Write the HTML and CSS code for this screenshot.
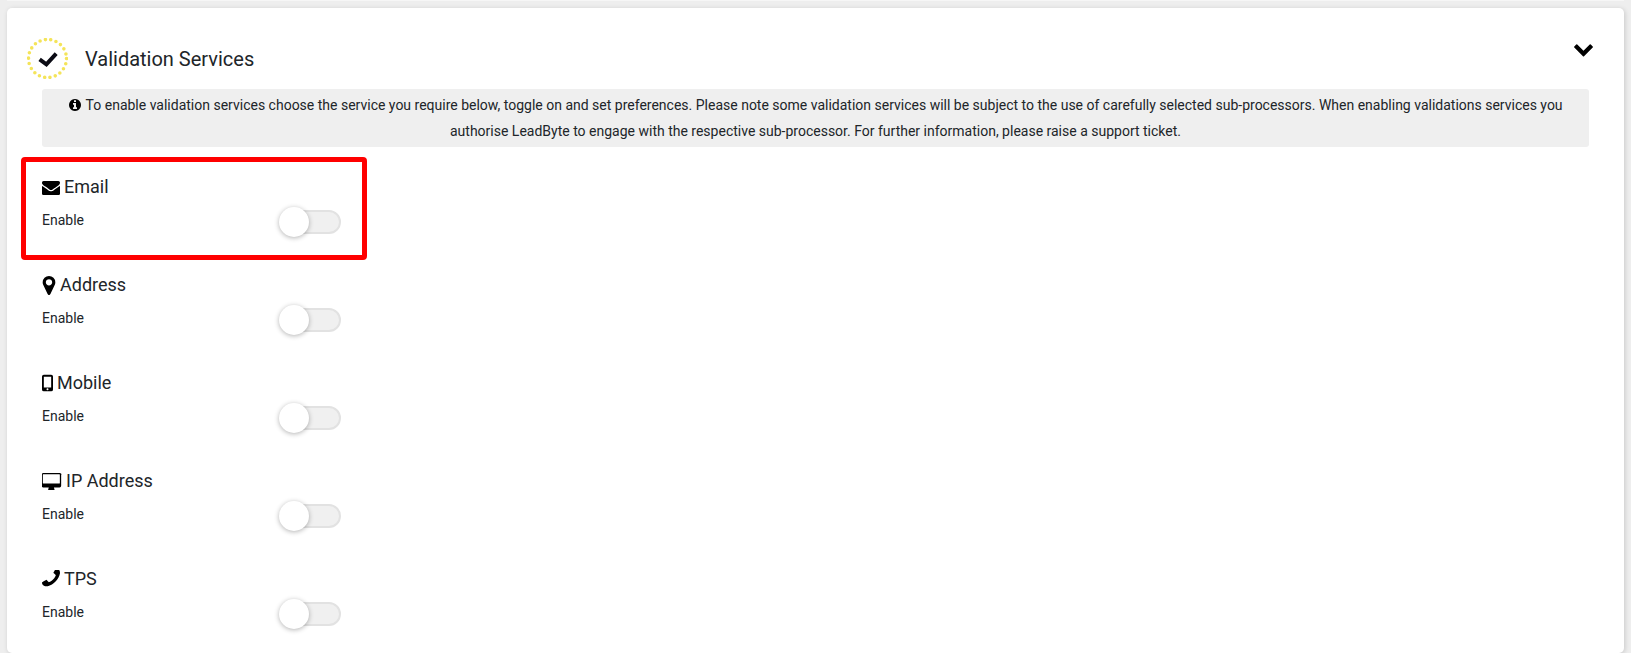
FILE: index.html
```html
<!DOCTYPE html>
<html lang="en">
<head>
  <meta charset="utf-8">
  <title>Validation Services</title>
  <link rel="stylesheet" href="styles.css">
</head>
<body>
  <div class="prev-card"></div>
  <div class="card">
    <div class="card-head">
      <svg class="ring" viewBox="0 0 41 41">
        <circle class="ring-dots" cx="20.5" cy="20.5" r="19"/>
        <polyline class="ring-check" points="12.6,21.4 19.4,26.4 29.2,15.6"/>
      </svg>
      <h2 class="card-title">Validation Services</h2>
      <svg class="chevron" viewBox="0 0 1792 1792"><path d="M1683 808l-742 741q-19 19-45 19t-45-19l-742-741q-19-19-19-45.5t19-45.5l166-165q19-19 45-19t45 19l531 531 531-531q19-19 45-19t45 19l166 165q19 19 19 45.5t-19 45.5z"/></svg>
    </div>

    <div class="notice">
      <svg class="notice-icon" viewBox="0 0 1792 1792"><path d="M1152 1376v-160q0-14-9-23t-23-9h-96v-512q0-14-9-23t-23-9h-320q-14 0-23 9t-9 23v160q0 14 9 23t23 9h96v320h-96q-14 0-23 9t-9 23v160q0 14 9 23t23 9h448q14 0 23-9t9-23zm-128-896v-160q0-14-9-23t-23-9h-192q-14 0-23 9t-9 23v160q0 14 9 23t23 9h192q14 0 23-9t9-23zm640 416q0 209-103 385.5t-279.5 279.5-385.5 103-385.5-103-279.5-279.5-103-385.5 103-385.5 279.5-279.5 385.5-103 385.5 103 279.5 279.5 103 385.5z"/></svg>
      To enable validation services choose the service you require below, toggle on and set preferences. Please note some validation services will be subject to the use of carefully selected sub-processors. When enabling validations services you authorise LeadByte to engage with the respective sub-processor. For further information, please raise a support ticket.
    </div>

    <div class="service">
      <div class="highlight"></div>
      <h3 class="service-name">
        <svg class="icon icon-email" viewBox="0 194 1792 1404"><path d="M1792 710v794q0 66-47 113t-113 47h-1472q-66 0-113-47t-47-113v-794q44 49 101 87 362 246 497 345 57 42 92.5 65.5t94.5 48 110 24.5h2q51 0 110-24.5t94.5-48 92.5-65.5q170-123 498-345 57-39 100-87zm0-294q0 79-49 151t-122 123q-376 261-468 325-10 7-42.5 30.5t-54 38-52 32.5-57.5 27-50 9h-2q-23 0-50-9t-57.5-27-52-32.5-54-38-42.5-30.5q-91-64-262-182.5t-205-142.5q-62-42-117-115.5t-55-136.5q0-78 41.5-130t118.5-52h1472q65 0 112.5 44.5t47.5 115.5z"/></svg>
        Email
      </h3>
      <div class="service-row">
        <span class="enable-label">Enable</span>
        <span class="toggle"><span class="knob"></span></span>
      </div>
    </div>

    <div class="service">
      <h3 class="service-name">
        <svg class="icon icon-address" viewBox="384 128 1024 1536"><path d="M1152 640q0-106-75-181t-181-75-181 75-75 181 75 181 181 75 181-75 75-181zm256 0q0 109-33 179l-364 774q-16 33-47.5 52t-67.5 19-67.5-19-46.5-52l-365-774q-33-70-33-179 0-212 150-362t362-150 362 150 150 362z"/></svg>
        Address
      </h3>
      <div class="service-row">
        <span class="enable-label">Enable</span>
        <span class="toggle"><span class="knob"></span></span>
      </div>
    </div>

    <div class="service">
      <h3 class="service-name">
        <svg class="icon icon-mobile" viewBox="0 0 12 18"><path fill-rule="evenodd" d="M2 0h8a2 2 0 0 1 2 2v14a2 2 0 0 1-2 2H2a2 2 0 0 1-2-2V2a2 2 0 0 1 2-2zM2 2.2v11.6h8V2.2zM6 14.6a1.1 1.1 0 1 0 0 2.2 1.1 1.1 0 0 0 0-2.2z"/></svg>
        Mobile
      </h3>
      <div class="service-row">
        <span class="enable-label">Enable</span>
        <span class="toggle"><span class="knob"></span></span>
      </div>
    </div>

    <div class="service">
      <h3 class="service-name">
        <svg class="icon icon-desktop" viewBox="0 0 1920 1664"><path d="M1728 992v-832q0-13-9.5-22.5t-22.5-9.5h-1600q-13 0-22.5 9.5t-9.5 22.5v832q0 13 9.5 22.5t22.5 9.5h1600q13 0 22.5-9.5t9.5-22.5zm128-832v1088q0 66-47 113t-113 47h-544q0 37 16 77.5t32 71 16 43.5q0 26-19 45t-45 19h-512q-26 0-45-19t-19-45q0-14 16-44t32-70 16-78h-544q-66 0-113-47t-47-113v-1088q0-66 47-113t113-47h1632q66 0 113 47t47 113z"/></svg>
        IP Address
      </h3>
      <div class="service-row">
        <span class="enable-label">Enable</span>
        <span class="toggle"><span class="knob"></span></span>
      </div>
    </div>

    <div class="service">
      <h3 class="service-name">
        <svg class="icon icon-phone" viewBox="192 256 1408 1408"><path d="M1600 1240q0 27-10 70.5t-21 68.5q-21 50-122 106-94 51-186 51-27 0-53-3.5t-57.5-12.5-47-14.5-55.5-20.5-49-18q-98-35-175-83-127-79-264-216t-216-264q-48-77-83-175-3-9-18-49t-20.5-55.5-14.5-47-12.5-57.5-3.5-53q0-92 51-186 56-101 106-122 25-11 68.5-21t70.5-10q14 0 21 3 18 6 53 76 11 19 30 54t35 63.5 31 53.5q3 4 17.5 25t21.5 35.5 7 28.5q0 20-28.5 50t-62 55-62 53-28.5 46q0 9 5 22.5t8.5 20.5 14 24 11.5 19q76 137 174 235t235 174q2 1 19 11.5t24 14 20.5 8.5 22.5 5q18 0 46-28.5t53-62 55-62 50-28.5q14 0 28.5 7t35.5 21.5 25 17.5q25 15 53.5 31t63.5 35 54 30q70 35 76 53 3 7 3 21z"/></svg>
        TPS
      </h3>
      <div class="service-row">
        <span class="enable-label">Enable</span>
        <span class="toggle"><span class="knob"></span></span>
      </div>
    </div>
  </div>
</body>
</html>
```

FILE: styles.css
```css
html, body {
  margin: 0;
  height: 100%;
  overflow: hidden;
}
body {
  background-color: #eeeeee;
  font-family: Roboto, "Liberation Sans", sans-serif;
  color: #212529;
  padding: 0 7px;
}
.prev-card {
  height: 1px;
  background-color: #f6f6f6;
  margin-bottom: 7px;
}
.card {
  background-color: white;
  border-radius: 5px;
  box-shadow: 1px 1px 5px rgba(0, 0, 0, 0.16);
  padding: 0 35px;
  height: 645px;
  overflow: hidden;
}
.card-head {
  display: flex;
  align-items: center;
  height: 81px;
  margin-left: -15px;
  position: relative;
}
.ring {
  width: 41px;
  height: 41px;
  margin-top: 20px;
  flex: none;
}
.ring-dots {
  fill: none;
  stroke: #f4e45a;
  stroke-width: 3.6;
  stroke-linecap: round;
  stroke-dasharray: 0 5.426;
}
.ring-check {
  fill: none;
  stroke: #0b0b14;
  stroke-width: 4;
}
.card-title {
  font-size: 20px;
  font-weight: 400;
  margin: 20px 0 0 17px;
}
.chevron {
  width: 21px;
  height: 21px;
  position: absolute;
  right: -5px;
  top: 30px;
}
.notice {
  background-color: #efefef;
  border-radius: 3px;
  font-size: 14px;
  line-height: 26px;
  text-align: center;
  padding: 3px 20px;
  height: 52px;
  margin-bottom: 10px;
}
.notice-icon {
  width: 14px;
  height: 14px;
  vertical-align: -2px;
}
.service {
  position: relative;
  height: 98px;
}
.service-name {
  font-size: 18px;
  font-weight: 400;
  line-height: 22px;
  margin: 0;
  padding-top: 19px;
  display: flex;
  align-items: center;
  gap: 4px;
}
.icon {
  flex: none;
}
.icon-email {
  width: 18px;
  height: 15px;
}
.icon-address {
  width: 14px;
  height: 19px;
}
.icon-mobile {
  width: 11px;
  height: 18px;
}
.icon-desktop {
  width: 20px;
  height: 17px;
}
.icon-phone {
  width: 18px;
  height: 18px;
  transform: scaleX(-1);
}
.service-row {
  display: flex;
  align-items: flex-start;
  justify-content: space-between;
  width: 299px;
  margin-top: 11px;
}
.enable-label {
  font-size: 14px;
  line-height: 23px;
}
.toggle {
  position: relative;
  display: block;
  width: 60px;
  height: 24px;
  margin-top: 1px;
  background-color: #f0f0f0;
  border: 2px solid #e2e2e2;
  border-radius: 12px;
  box-sizing: border-box;
}
.knob {
  position: absolute;
  left: -4px;
  top: -5px;
  width: 30px;
  height: 30px;
  border-radius: 50%;
  background-color: white;
  box-shadow: 0 1px 5px rgba(0, 0, 0, 0.3);
}
.highlight {
  position: absolute;
  left: -21px;
  top: 0;
  width: 346px;
  height: 103px;
  box-sizing: border-box;
  border: 5px solid #ff0000;
  border-radius: 4px;
}
```
